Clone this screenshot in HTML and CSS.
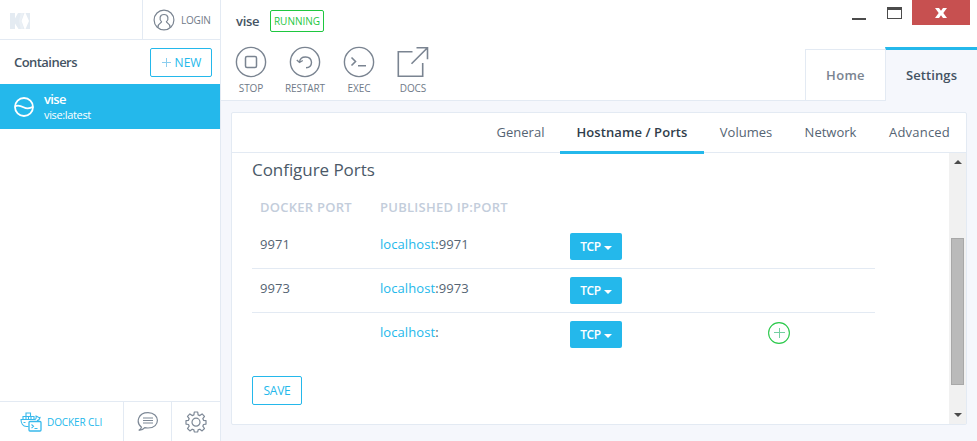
FILE: index.html
```html
<!DOCTYPE html>
<html lang="en">
<head>
<meta charset="utf-8">
<title>vise</title>
<link rel="stylesheet" href="styles.css">
</head>
<body>
<div class="app">
  <aside class="sidebar">
    <div class="brand">
      <div class="logo"><svg width="20" height="16" viewBox="0 0 20 16" fill="#e4ebf2"><path d="M0 0h5v5.500L8 0h12v16H8.500L5 10.500V16H0z"/><path d="M10.700 0h3l-2.500 7.500 2.500 8.500h-3l-1.700-8z" fill="#fff" opacity=".25"/><path d="M14.500 0h1L19 8l-3.500 8h-1L11.500 8z" fill="#fff"/></svg></div>
      <div class="login">
        <svg width="22" height="22" viewBox="0 0 22 22" fill="none" stroke="#7a8491" stroke-width="1.200"><circle cx="11" cy="11" r="9.900"/><path d="M8.600 12.600C6 10.500 6.500 5.500 11 5.500s5 5 2.400 7.100c0 1.600 3.600 1.200 3.600 5.600M8.600 12.600c0 1.600-3.600 1.200-3.600 5.600"/></svg>
        <span>LOGIN</span>
      </div>
    </div>
    <div class="list-head"><span class="list-title">Containers</span><button class="btn new"><svg width="11" height="11" viewBox="0 0 11 11"><path d="M5.500 1v9M1 5.500h9" stroke="#8bcdee" stroke-width="1"/></svg><span>NEW</span></button></div>
    <div class="container-item">
      <svg width="20" height="20" viewBox="0 0 20 20" fill="none" stroke="#fff" stroke-width="1.800"><circle cx="10" cy="10" r="9"/><path d="M1 9.500c3-2 5.500-.8 8.500.8s6 1.700 9.500-.5"/></svg>
      <div class="item-text"><div class="item-name">vise</div><div class="item-image">vise:latest</div></div>
    </div>
    <div class="footer">
      <div class="cli">
        <svg width="22" height="20" viewBox="0 0 22 20" fill="none" stroke="#38b9ec" stroke-width="1.100"><path d="M8.500 14.500H6.500C3 14.500 1 11.500 1 7.500h13.500c1.600 0 2-2 1.500-3.500 1.500 0 1.500 2 4 1.500-.5 2-1.500 3-3 3M3 7.500v-3h11v3M6 4.500V1h4.500v3.500M6 4.500v3M8.500 4.500v3M11 4.500v3M3.500 10.500h2"/><rect x="9" y="9.500" width="12" height="9.500" rx="1" fill="#fff" stroke-width="1.300"/><path d="M11.500 12.500l2 1.800-2 1.800M14.500 16.500h3"/></svg>
        <span>DOCKER CLI</span>
      </div>
      <div class="foot-icon"><svg width="22" height="22" viewBox="0 0 22 22" fill="none" stroke="#7d8896" stroke-width="1.200"><path d="M4.500 16.200C-1.500 11.500 1 1.600 11 1.600c12 0 13 15.400 0 15.400-1.300 0-2.300-.1-3.200-.4-1.300 1.700-3.300 2.700-6 2.800 1.500-.8 2.500-1.800 2.700-3.200zM6 7h10M6 9.500h10M6 12h10"/></svg></div>
      <div class="foot-icon"><svg width="22" height="22" viewBox="0 0 22 22" fill="none" stroke="#7d8896" stroke-width="1.200" stroke-linejoin="round"><path d="M9.300 1h3.400l.4 2.900 1.700.7 2.300-1.700 2.400 2.400-1.700 2.300.7 1.700 2.500.4v3.400l-2.500.4-.7 1.700 1.700 2.300-2.400 2.400-2.300-1.700-1.700.7-.4 2.100H9.300l-.4-2.100-1.700-.7-2.300 1.700-2.400-2.400 1.700-2.300-.7-1.700-2.500-.4V9.700l2.500-.4.7-1.700-1.700-2.300 2.400-2.400 2.300 1.700 1.700-.7z"/><circle cx="11" cy="11.200" r="4"/></svg></div>
    </div>
  </aside>
  <main class="main">
    <header class="header">
      <div class="info">
        <div class="title"><span class="name">vise</span><span class="badge">RUNNING</span></div>
        <div class="actions">
          <div class="action"><svg width="32" height="32" viewBox="0 0 32 32" fill="none" stroke="#7a8491" stroke-width="1.400"><circle cx="16" cy="16" r="14.600"/><rect x="10.500" y="10.500" width="11" height="11" rx="1.500" stroke-width="1.500"/></svg><span>STOP</span></div>
          <div class="action"><svg width="32" height="32" viewBox="0 0 32 32" fill="none" stroke="#7a8491" stroke-width="1.400"><circle cx="16" cy="16" r="14.600"/><path d="M10.500 16c1-7 11.500-6.500 12 .2 0 3-2.200 5.300-5.500 5.500M7.800 14l2.700 2.500 3.300-2"/></svg><span>RESTART</span></div>
          <div class="action"><svg width="32" height="32" viewBox="0 0 32 32" fill="none" stroke="#7a8491" stroke-width="1.400"><circle cx="16" cy="16" r="14.600"/><path d="M8.500 11.500l4 4-4 4M15 19.800h8" stroke-width="1.600"/></svg><span>EXEC</span></div>
          <div class="action"><svg width="32" height="32" viewBox="0 0 32 32" fill="none" stroke="#7a8491" stroke-width="1.600"><path d="M15.500 5.800H1.300v24.400h24.400V17M19.500 1.800h11v11.500M30.500 1.800l-16 16"/></svg><span>DOCS</span></div>
        </div>
      </div>
      <div class="header-right">
        <div class="window-controls"><i class="minimize"></i><i class="maximize"></i><button class="close"><svg width="12" height="10" viewBox="0 0 12 10"><path d="M0 0h4l2 2.800L8 0h4L8.300 5 12 10H8L6 7.200 4 10H0l3.700-5z" fill="#fff"/></svg></button></div>
        <nav class="page-tabs"><span class="page-tab home"><b>Home</b></span><span class="page-tab settings"><b>Settings</b></span></nav>
      </div>
    </header>
    <section class="panel">
      <nav class="tabs"><span class="tab general">General</span><span class="tab active">Hostname / Ports</span><span class="tab volumes">Volumes</span><span class="tab network">Network</span><span class="tab advanced">Advanced</span></nav>
      <div class="scroll">
        <div class="content">
          <h3>Configure Ports</h3>
          <div class="table">
            <div class="row head"><span>DOCKER PORT</span><span>PUBLISHED IP:PORT</span></div>
            <div class="row"><span>9971</span><span><a>localhost</a>:9971</span><span class="tcp">TCP<i></i></span></div>
            <div class="row"><span>9973</span><span><a>localhost</a>:9973</span><span class="tcp">TCP<i></i></span></div>
            <div class="row"><span></span><span><a>localhost</a>:</span><span class="tcp">TCP<i></i></span><svg class="add" width="22" height="22" viewBox="0 0 22 22" fill="none"><circle cx="11" cy="11" r="10.400" stroke="#2bc94b" stroke-width="1.100"/><path d="M11.500 6v10M6 10.500h11" stroke="#74cfa0"/></svg></div>
          </div>
          <button class="btn save"><span>SAVE</span></button>
        </div>
        <div class="scrollbar"><i class="up"></i><div class="thumb"></div><i class="down"></i></div>
      </div>
    </section>
  </main>
</div>
</body>
</html>
```

FILE: styles.css
```css
* { box-sizing: border-box; }
body { margin: 0; font: 13px/18px "Open Sans", "Noto Sans", sans-serif; color: #556473; background: #f5f7fc; }
button { font: inherit; padding: 0; margin: 0; }
svg { display: block; flex: none; }
span { white-space: nowrap; }
.app { display: flex; width: 977px; height: 441px; overflow: hidden; }
.sidebar { width: 221px; flex: none; background: #fff; border-right: 1px solid #e3eaf3; display: flex; flex-direction: column; }
.brand { height: 40px; display: flex; border-bottom: 1px solid #e3eaf3; }
.logo { width: 142px; padding: 13px 0 0 10px; }
.login { flex: 1; border-left: 1px solid #e3eaf3; padding-left: 10px; display: flex; align-items: center; gap: 6px; font-size: 10px; letter-spacing: -.2px; color: #6f7a88; }
.list-head { height: 44px; padding: 0 8px 0 14px; display: flex; align-items: center; justify-content: space-between; color: #445363; }
.list-title { margin-top: -1px; font-size: 13px; font-weight: 600; letter-spacing: -.55px; }
.btn { height: 29px; border: 1px solid #24b8eb; border-radius: 2px; background: #fff; color: #24b8eb; display: flex; align-items: center; justify-content: center; }
.new { width: 62px; font-size: 12px; gap: 3px; }
.new span { padding-top: 1px; }
.container-item { height: 45px; background: #24b8eb; color: #fff; display: flex; align-items: center; gap: 10px; padding-left: 14px; }
.item-text { line-height: 15px; }
.item-name { font-size: 13px; font-weight: 600; letter-spacing: -.6px; }
.item-image { font-size: 11px; letter-spacing: -.35px; }
.footer { height: 40px; margin-top: auto; border-top: 1px solid #e3eaf3; display: flex; }
.cli { width: 123px; padding-left: 20px; display: flex; align-items: center; gap: 5px; color: #24b8eb; font-size: 10px; letter-spacing: -.1px; }
.foot-icon { width: 48px; border-left: 1px solid #e3eaf3; display: flex; align-items: center; justify-content: center; }
.foot-icon:last-child { width: 49px; }
.main { flex: 1; min-width: 0; }
.header { height: 101px; background: #fff; border-bottom: 1px solid #e3eaf3; display: flex; justify-content: space-between; }
.info { padding: 9px 0 0 3px; }
.title { height: 23px; padding-left: 12px; display: flex; align-items: center; color: #445363; }
.name { width: 34px; font-weight: 600; letter-spacing: -.3px; }
.badge { width: 54px; height: 22px; border: 1px solid #1ec73f; border-radius: 2px; color: #1ec73f; font-size: 10px; line-height: 21px; text-align: center; }
.actions { display: flex; padding-top: 14px; }
.action { width: 54px; display: flex; flex-direction: column; align-items: center; color: #6f7a88; font-size: 10px; letter-spacing: -.1px; line-height: 20px; }
.header-right { width: 172px; display: flex; flex-direction: column; }
.window-controls { display: flex; height: 25px; justify-content: flex-end; padding-right: 7px; }
.minimize { width: 14px; height: 2px; margin: 18px 21px 0 0; background: #4b4b4b; }
.maximize { width: 15px; height: 12px; margin: 7px 10px 0 0; border: 1px solid #4b4b4b; border-top-width: 3px; }
.close { width: 58px; height: 25px; border: 0; background: #c75050; display: flex; align-items: center; justify-content: center; }
.page-tabs { height: 54px; margin-top: 22px; display: flex; align-items: flex-end; }
.page-tab { display: flex; align-items: center; justify-content: center; }
.page-tab b { margin-top: -2px; font-weight: 600; }
.home { width: 80px; height: 52px; border: 1px solid #e3eaf3; border-right: 0; border-bottom: 0; color: #7a8491; }
.home b { letter-spacing: .3px; }
.settings { width: 92px; height: 54px; border-top: 3px solid #24b8eb; border-left: 1px solid #e3eaf3; background: #f5f7fc; color: #445363; }
.settings b { letter-spacing: .1px; }
.panel { width: 736px; height: 313px; margin: 11px 0 0 10px; border: 1px solid #e3eaf3; border-radius: 2px; background: #fff; }
.tabs { height: 40px; border-bottom: 1px solid #e3eaf3; display: flex; justify-content: flex-end; line-height: 39px; text-align: center; }
.general { width: 79px; }
.active { width: 144px; height: 41px; border-bottom: 3px solid #24b8eb; color: #303d4b; font-weight: 600; letter-spacing: .08px; }
.volumes { width: 84px; }
.network { width: 85px; }
.advanced { width: 93px; letter-spacing: .2px; }
.scroll { height: 271px; display: flex; }
.content { flex: 1; padding: 5px 74px 0 20px; }
h3 { margin: 0; font-size: 17px; line-height: 23px; font-weight: 400; letter-spacing: -.05px; color: #4b5968; }
.table { margin-top: 10px; }
.row { height: 44px; display: grid; grid-template-columns: 120px 190px 198px auto; padding: 11px 0 0 8px; align-items: start; }
.row + .row + .row { border-top: 1px solid #e3eaf3; padding-top: 10px; }
.row span { letter-spacing: .08px; }
.row.head { height: 33px; padding-top: 7px; color: #c3cddb; font-weight: 600; }
.row.head span { letter-spacing: .25px; }
.row a { color: #24b8eb; }
.row .tcp { width: 52px; height: 27px; margin-top: -2px; border-radius: 2px; background: #24b8eb; color: #fff; font-size: 12px; font-weight: 600; letter-spacing: -.4px; display: flex; align-items: center; justify-content: center; gap: 3px; }
.tcp i { width: 0; height: 0; margin-top: 3px; border: 4px solid transparent; border-top-color: #fff; border-bottom: 0; }
.add { margin-top: -1px; }
.save { width: 50px; margin-top: 20px; font-size: 12px; letter-spacing: -.2px; }
.save span { padding-top: 1px; }
.scrollbar { width: 17px; background: #f1f1f1; display: flex; flex-direction: column; align-items: center; }
.up, .down { width: 0; height: 0; border: 4px solid transparent; }
.up { border-top: 0; border-bottom-color: #4b4b4b; margin-top: 7px; }
.thumb { width: 13px; height: 147px; margin-top: 74px; background: #bababa; border: 1px solid #a8a8a8; }
.down { border-bottom: 0; border-top-color: #4b4b4b; margin: auto 0 7px; }
```
